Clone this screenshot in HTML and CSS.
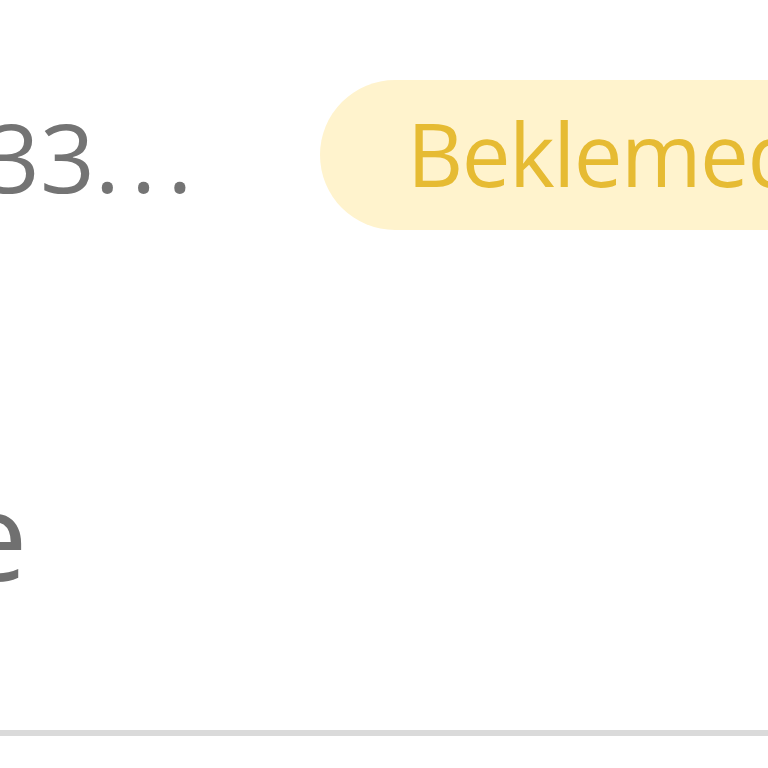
FILE: index.html
```html
<!DOCTYPE html>
<html lang="tr">
<head>
<meta charset="utf-8">
<link rel="stylesheet" href="styles.css">
</head>
<body>
<div class="item">
  <div class="row-top">
    <div class="code">33<span class="dots">...</span></div>
    <span class="badge">Beklemede</span>
  </div>
  <div class="row-sub">e</div>
</div>
</body>
</html>
```
FILE: styles.css
```css
html, body {
  margin: 0;
  padding: 0;
  background: #ffffff;
  overflow: hidden;
  width: 768px;
  height: 768px;
}
.item {
  font-family: "Open Sans", Lato, sans-serif;
  padding-top: 80px;
  padding-bottom: 113px;
  border-bottom: 6px solid #dadada;
}
.row-top {
  display: flex;
  align-items: flex-start;
  height: 150px;
  white-space: nowrap;
}
.code {
  flex: 0 0 335px;
  margin-left: -15px;
  padding-top: 1px;
  font-size: 96px;
  line-height: 150px;
  color: #747474;
}
.dots {
  letter-spacing: 11px;
}
.badge {
  flex: 0 0 auto;
  box-sizing: border-box;
  height: 150px;
  padding: 0 87px 4px;
  line-height: 146px;
  border-radius: 75px;
  background: #fff3cd;
  color: #e6bb33;
  font-size: 87px;
  letter-spacing: -1.5px;
}
.row-sub {
  margin-top: 221px;
  margin-left: -41px;
  font-size: 122px;
  line-height: 166px;
  color: #707070;
  white-space: nowrap;
}
```
